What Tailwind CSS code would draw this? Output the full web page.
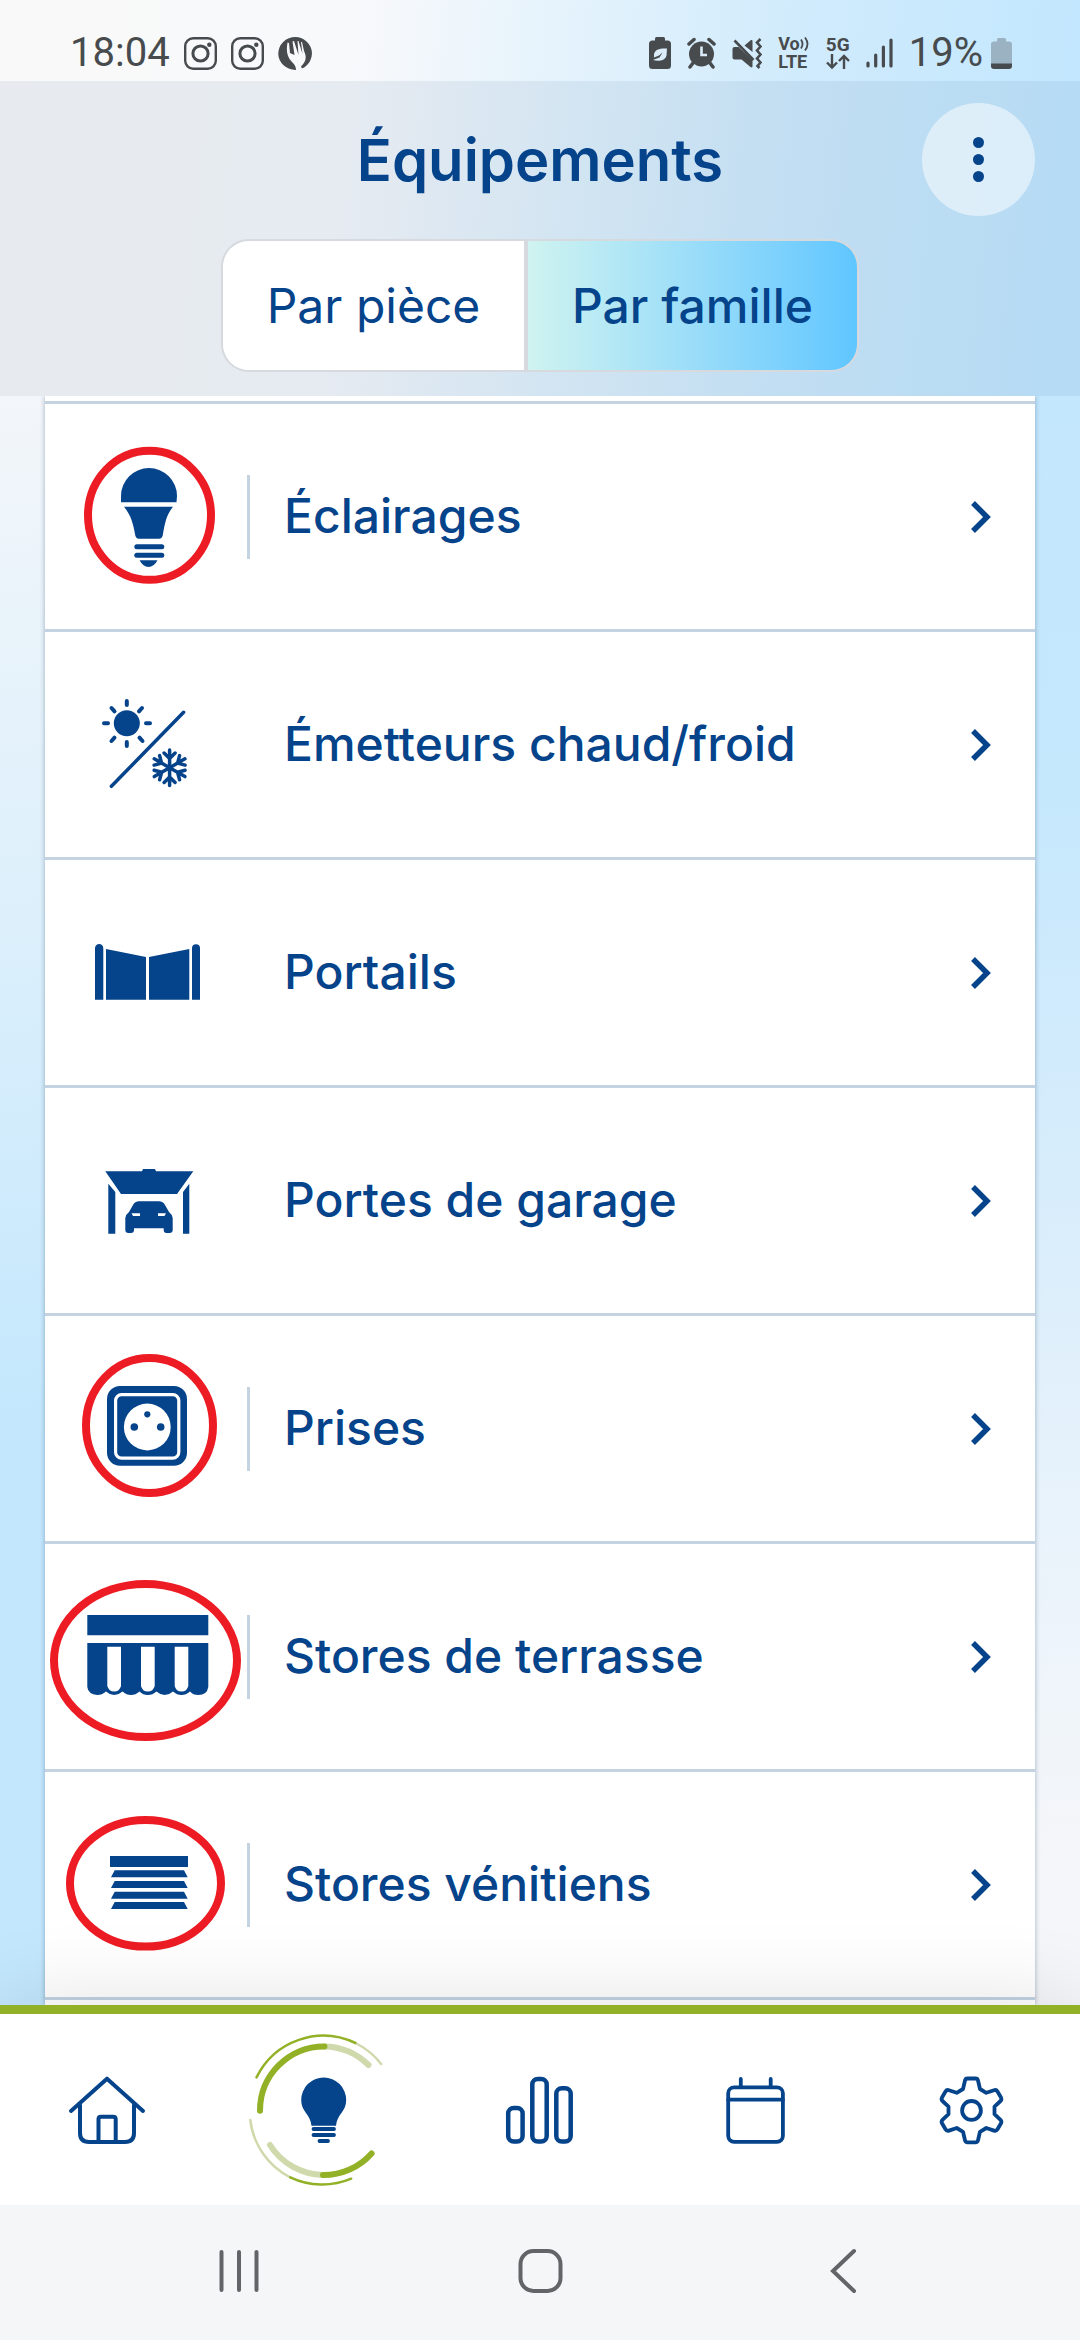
<!DOCTYPE html>
<html lang="fr">
<head>
<meta charset="utf-8">
<meta name="viewport" content="width=device-width, initial-scale=1">
<title>Équipements</title>
<script src="https://cdn.jsdelivr.net/npm/@tailwindcss/browser@4"></script>
</head>
<body class="flex min-h-screen flex-col bg-white font-['Inter',sans-serif] text-[#05438b]">

<!-- Shared glyphs -->
<svg class="hidden" aria-hidden="true">
  <symbol id="chevron" viewBox="0 0 24 36"><path d="M6 4l14 14L6 32" fill="none" stroke="currentColor" stroke-width="5.500"/></symbol>
  <symbol id="insta" viewBox="0 0 33 33"><g fill="none" stroke="currentColor"><rect x="1.200" y="1.200" width="30.600" height="30.600" rx="8" stroke-width="2.400"/><circle cx="16.500" cy="16.500" r="7.600" stroke-width="3"/></g><circle cx="25.300" cy="7.700" r="2.200" fill="currentColor"/></symbol>
</svg>

<!-- Status bar and header share one gradient -->
<div class="relative z-10 bg-[linear-gradient(96deg,#f9f9f9_0%,#f8f9fb_32%,#e3f2fc_52%,#d0ebfc_72%,#c3e7fe_96%)]">
  <div class="flex h-[81px] items-center justify-between pl-[70px] pr-[68px] pt-[25px] text-[#474b4e]">
    <div class="flex items-center gap-[14px] font-['Roboto',sans-serif] text-[40px] leading-[40px]">
      <span>18:04</span>
      <svg class="size-[33px]"><use href="#insta"/></svg>
      <svg class="size-[33px]"><use href="#insta"/></svg>
      <svg class="h-[33px] w-[35px]" viewBox="0 0 35 33">
        <path fill="currentColor" d="M17.500 0A17 16.500 0 0 1 24 31.500L23 29.500C28 25 29 20 26 14L24 5L23 5L24.500 17L20.500 4L19.500 4L20.500 18L16 4L14.500 4.500L16.500 18L12 16L11 6L9.500 5.500C8 14 9 20 14 25C17 28 18 30 18 33A17.500 16.500 0 0 1 17.500 0Z"/>
      </svg>
    </div>
    <div class="flex items-center gap-4 font-['Roboto',sans-serif]">
      <svg class="h-8 w-[22px]" viewBox="0 0 22 32"><path fill="currentColor" d="M6 1.500Q6 0 7.500 0H14.500Q16 0 16 1.500V3.500H18.500Q22 3.500 22 7V28.500Q22 32 18.500 32H3.500Q0 32 0 28.500V7Q0 3.500 3.500 3.500H6Z"/><path fill="#dcedf9" d="M18 11.500C12 11 5.500 12 5 17.500V20.500L10 18.500L13.500 15.500L10.500 20.500L4 23C8 24.500 16 24.500 17.500 18.500Z"/></svg>
      <svg class="h-8 w-[29px]" viewBox="0 0 29 32"><circle cx="14.500" cy="17" r="12.500" fill="currentColor"/><path d="M2 7l5-4.500M27 7l-5-4.500M6 26l-3 4M23 26l3 4" stroke="currentColor" stroke-width="3.500" stroke-linecap="round"/><path d="M14.500 9.500V18H20" fill="none" stroke="#dcedf9" stroke-width="2.600"/></svg>
      <svg class="h-8 w-[30px]" viewBox="0 0 29 32"><path fill="currentColor" d="M0 12Q0 10 2 10H6L20 23V29.500Q19.500 31 18 30L9 22.500H2Q0 22.500 0 20.500ZM12 8.500L18.500 3Q20 2.500 20 4V15Z"/><path d="M2 3.500L21 23" stroke="currentColor" stroke-width="2.600"/><path d="M28 2l-3.500 3.500 3.500 4-3.500 4 3.500 4-3.500 4 3.500 4-3 3.500 2 2" fill="none" stroke="currentColor" stroke-width="2.600"/></svg>
      <div class="flex flex-col text-[18px] font-bold leading-[18px]">
        <span class="flex items-center">Vo<svg class="h-[14px] w-[10px]" viewBox="0 0 10 14"><path d="M1 2.500q3 4.500 0 9M5 .5q5 6.500 0 13" fill="none" stroke="currentColor" stroke-width="1.800"/></svg></span>
        <span>LTE</span>
      </div>
      <div class="flex flex-col items-center text-[19px] font-bold leading-[18px]">
        <span>5G</span>
        <svg class="h-4 w-6" viewBox="0 0 24 16"><path d="M6 0V13.500M1 8.500l5 5 5-5M18 15V2M13 7l5-5 5 5" fill="none" stroke="currentColor" stroke-width="2.400"/></svg>
      </div>
      <svg class="h-[30px] w-[27px]" viewBox="0 0 27 30"><path d="M2 25v3M9.700 17v11M17.400 9v19M25 2v26" stroke="currentColor" stroke-width="3.200" stroke-linecap="round"/></svg>
      <div class="flex items-center gap-2">
        <span class="text-[40px] leading-[40px]">19%</span>
        <svg class="h-[31px] w-[21px]" viewBox="0 0 21 31"><path fill="#9ab2c1" d="M6 1.500Q6 0 7.500 0H13.500Q15 0 15 1.500V3.500H18Q21 3.500 21 6.500V26H0V6.500Q0 3.500 3 3.500H6Z"/><path fill="currentColor" d="M0 25.500H21V28Q21 31 18 31H3Q0 31 0 28Z"/></svg>
      </div>
    </div>
  </div>

  <header class="flex flex-col items-center gap-[23px] bg-[#33618f]/9 pb-6 pt-[22px]">
    <div class="grid w-full grid-cols-[113px_1fr_113px] items-center px-[45px]">
      <h1 class="col-start-2 text-center text-[58px] font-semibold leading-[64px]">Équipements</h1>
      <button type="button" aria-label="Plus d'options" class="flex size-[113px] flex-col items-center justify-center gap-[6px] rounded-full bg-white/50">
        <span class="size-[11px] rounded-full bg-[#05438b]"></span>
        <span class="size-[11px] rounded-full bg-[#05438b]"></span>
        <span class="size-[11px] rounded-full bg-[#05438b]"></span>
      </button>
    </div>
    <div class="grid h-[133px] w-[638px] max-w-full grid-cols-[305px_1fr] overflow-hidden rounded-[28px] border-2 border-[#d6d9dd] text-[48px]">
      <button type="button" class="border-r-4 border-[#d6d9dd] bg-white">Par pièce</button>
      <button type="button" aria-pressed="true" class="bg-linear-to-r from-[#cff3f0] to-[#5fc6ff] font-medium">Par famille</button>
    </div>
  </header>
</div>

<main class="flex flex-1 flex-col bg-[linear-gradient(to_bottom,#f3f6fa_0%,#def0fb_30%,#c3e7fd_65%,#c3e7fd_100%)]">
  <div class="flex flex-1 flex-col bg-[linear-gradient(to_bottom,#c3e7fd_0%,#c6e8fd_25%,#dceefb_55%,#e9f3fb_70%,#f5f6f9_92%)] bg-[length:50%_100%] bg-right bg-no-repeat px-[45px]">
    <ul class="flex-1 bg-white pt-[5px] text-[48px] font-medium leading-[56px] shadow-[0_0_5px_rgba(60,90,120,0.45)]">
      <li class="border-y-3 border-[#c3d3e2]">
        <a href="#eclairages" class="flex items-center pr-[44px]">
          <svg class="h-[225px] w-[202px] shrink-0" viewBox="0 0 202 225" fill="currentColor">
            <path d="M76 98.300V92A28 28 0 0 1 132 92L131.500 98.300ZM79 102.700H128C122 110 120 118 118 130Q117.500 134.700 114 134.700H94Q90.500 134.700 90 130C88 118 85 110 79 102.700Z"/>
            <rect x="89.300" y="140.300" width="30" height="5" rx="2.500"/><rect x="89.300" y="148.700" width="30" height="5" rx="2.500"/><path d="M94.600 156.300H112.500Q109 163 103.500 163T94.600 156.300Z"/>
            <ellipse cx="104.500" cy="111.300" rx="61.500" ry="64.500" fill="none" stroke="#ed1c24" stroke-width="8"/>
          </svg>
          <span class="h-[84px] w-[3px] bg-[#c3d3e2]"></span>
          <span class="flex-1 pb-[2px] pl-[34px]">Éclairages</span>
          <svg class="h-9 w-6"><use href="#chevron"/></svg>
        </a>
      </li>
      <li class="border-b-3 border-[#c3d3e2]">
        <a href="#emetteurs" class="flex items-center pr-[44px]">
          <svg class="h-[225px] w-[202px] shrink-0" viewBox="0 0 202 225" fill="none" stroke="currentColor" stroke-linecap="round" stroke-width="4">
            <circle cx="81.800" cy="91.300" r="13" fill="currentColor" stroke="none"/>
            <path d="M81.800 69v4M81.800 110v4M59 91.300h4M101 91.300h4M66.500 76l3 3.300M97 76l-3 3.300M66.500 109l3-3.300M97.500 109l-3-3.300"/>
            <path d="M66.400 154.300L138.600 80.300" stroke-width="3.500"/>
            <g stroke-width="3.500">
              <path id="arm" d="M124.600 135.700V118M124.600 126.500l-5.500-5.500M124.600 126.500l5.500-5.500"/>
              <use href="#arm" transform="rotate(60 124.600 135.700)"/><use href="#arm" transform="rotate(120 124.600 135.700)"/><use href="#arm" transform="rotate(180 124.600 135.700)"/><use href="#arm" transform="rotate(240 124.600 135.700)"/><use href="#arm" transform="rotate(300 124.600 135.700)"/>
            </g>
          </svg>
          <span class="flex-1 pb-[2px] pl-[37px]">Émetteurs chaud/froid</span>
          <svg class="h-9 w-6"><use href="#chevron"/></svg>
        </a>
      </li>
      <li class="border-b-3 border-[#c3d3e2]">
        <a href="#portails" class="flex items-center pr-[44px]">
          <svg class="h-[225px] w-[202px] shrink-0" viewBox="0 0 202 225" fill="currentColor">
            <path d="M50 139.700V88.200a4.100 4.100 0 0 1 8.300 0V139.700ZM147 139.700V88.200a4 4 0 0 1 8 0V139.700ZM61 89L101 97V139.700H61ZM104 97L144.300 89V139.700H104Z"/>
          </svg>
          <span class="flex-1 pb-[2px] pl-[37px]">Portails</span>
          <svg class="h-9 w-6"><use href="#chevron"/></svg>
        </a>
      </li>
      <li class="border-b-3 border-[#c3d3e2]">
        <a href="#garage" class="flex items-center pr-[44px]">
          <svg class="h-[225px] w-[202px] shrink-0" viewBox="0 0 202 225" fill="currentColor">
            <path d="M60.300 83.300H97L98 81H110L111 83.300H148.300L132 106H76ZM63.300 95.700L70.300 104V145.700H63.300ZM144.300 95.700L138 104V145.700H144.300Z"/>
            <path fill-rule="evenodd" d="M94 113.300H114Q118 113.300 120 117L124 124Q127.700 127 127.700 130V142Q127.700 145 124.500 145H121.500Q118.700 145 118.700 142V140.300H89V142Q89 145 86 145H83.500Q80.300 145 80.300 142V130Q80.300 127 84 124L88 117Q90 113.300 94 113.300ZM86.500 125.300L88 128H95V125.300ZM121 125.300L119.500 128H113V125.300Z"/>
          </svg>
          <span class="flex-1 pb-[2px] pl-[37px]">Portes de garage</span>
          <svg class="h-9 w-6"><use href="#chevron"/></svg>
        </a>
      </li>
      <li class="border-b-3 border-[#c3d3e2]">
        <a href="#prises" class="flex items-center pr-[44px]">
          <svg class="h-[225px] w-[202px] shrink-0" viewBox="0 0 202 225" fill="currentColor">
            <rect x="62" y="70" width="80" height="79.700" rx="13"/>
            <rect x="70.600" y="78.600" width="63.200" height="63.600" rx="6" fill="none" stroke="#fff" stroke-width="3.200"/>
            <circle cx="102.300" cy="111" r="23.400" fill="#fff"/>
            <circle cx="89.300" cy="111" r="3.800"/><circle cx="115.700" cy="111" r="3.800"/><circle cx="102.300" cy="98.300" r="3.100"/>
            <ellipse cx="104.500" cy="109.500" rx="63.500" ry="67.500" fill="none" stroke="#ed1c24" stroke-width="8"/>
          </svg>
          <span class="h-[84px] w-[3px] bg-[#c3d3e2]"></span>
          <span class="flex-1 pb-[2px] pl-[34px]">Prises</span>
          <svg class="h-9 w-6"><use href="#chevron"/></svg>
        </a>
      </li>
      <li class="border-b-3 border-[#c3d3e2]">
        <a href="#terrasse" class="flex items-center pr-[44px]">
          <svg class="h-[225px] w-[202px] shrink-0" viewBox="0 0 202 225" fill="currentColor">
            <path d="M42.300 71H163.300V91.300H42.300Z"/>
            <path d="M42.300 99H163.300V143Q162 151 153.300 151Q148 151 145 147.500Q141 151 136.500 151T128 147.500Q124 151 119.700 151T111.500 147.500Q107.500 151 102.800 151T94.500 147.500Q90.500 151 86 151T77.500 147.500Q73.500 151 69.200 151T61 147.500Q57 151 52.300 151Q43 150 42.300 143Z"/>
            <path fill="#fff" d="M62.300 102.700H76V142Q74.500 147.500 69.200 147.500T62.300 142ZM96 102.700H109.700V142Q108.200 147.500 102.800 147.500T96 142ZM129.700 102.700H143.300V142Q142 147.500 136.500 147.500T129.700 142Z"/>
            <ellipse cx="100.500" cy="116.500" rx="91.500" ry="76.500" fill="none" stroke="#ed1c24" stroke-width="8"/>
          </svg>
          <span class="h-[84px] w-[3px] bg-[#c3d3e2]"></span>
          <span class="flex-1 pb-[2px] pl-[34px]">Stores de terrasse</span>
          <svg class="h-9 w-6"><use href="#chevron"/></svg>
        </a>
      </li>
      <li class="border-b-3 border-[#c3d3e2]">
        <a href="#venitiens" class="flex items-center pr-[44px]">
          <svg class="h-[225px] w-[202px] shrink-0" viewBox="0 0 202 225" fill="currentColor">
            <path d="M65 84H143V95H65ZM69.700 98.300H139L142.700 105.300H66ZM69.700 109H139L142.700 116H66ZM69.700 119.700H139L142.700 126.700H66ZM69.700 130H139L142.700 137H66Z"/>
            <ellipse cx="100.500" cy="111.300" rx="75.500" ry="63.300" fill="none" stroke="#ed1c24" stroke-width="8"/>
          </svg>
          <span class="h-[84px] w-[3px] bg-[#c3d3e2]"></span>
          <span class="flex-1 pb-[2px] pl-[34px]">Stores vénitiens</span>
          <svg class="h-9 w-6"><use href="#chevron"/></svg>
        </a>
      </li>
    </ul>
  </div>
</main>

<nav class="relative flex h-[200px] items-center border-t-9 border-[#93b127] bg-white shadow-[0_0_90px_rgba(0,0,0,0.12)]" aria-label="Navigation principale">
  <a href="#accueil" aria-label="Accueil" class="flex flex-1 justify-center">
    <svg class="h-40 w-[150px]" viewBox="0 0 150 160" fill="none" stroke="currentColor" stroke-width="4" stroke-linecap="round" stroke-linejoin="round"><path d="M38 81L74 48.700L110 81M47 75V103Q47 112 56 112H92Q101 112 101 103V75M65.500 112V89Q65.500 86.700 68 86.700H80Q82.700 86.700 82.700 89V112"/></svg>
  </a>
  <a href="#equipements" aria-label="Équipements" aria-current="page" class="flex flex-1 justify-center">
    <svg class="h-40 w-[150px]" viewBox="0 0 150 160" fill="none" stroke-linecap="round">
      <g stroke="#cfd9ab"><path stroke-width="6" d="M75 16.400A64.300 64.300 0 0 1 119.500 35M21 115A64.300 64.300 0 0 0 74 145"/><path stroke-width="2.500" d="M106.400 13A74.300 74.300 0 0 1 132.200 34M1.300 90A74.300 74.300 0 0 0 41.300 147.400"/></g>
      <g stroke="#93b127"><path stroke-width="6" d="M11 80.700A64.300 64.300 0 0 1 75.400 16.400M74 145A64.300 64.300 0 0 0 122.600 123.400"/><path stroke-width="2.500" d="M7.500 47.400A74.300 74.300 0 0 1 106.400 13M41.300 147.400A74.300 74.300 0 0 0 102.200 148.700"/></g>
      <path fill="currentColor" d="M74.700 47.500A22.500 22.500 0 0 1 97.200 70C97.200 82 88 84 87 95.700H62.500C61.500 84 52.200 82 52.200 70A22.500 22.500 0 0 1 74.700 47.500Z"/>
      <path stroke="currentColor" stroke-width="3.800" d="M64.500 99H85M64.500 105H85M70.500 111H79"/>
    </svg>
  </a>
  <a href="#consommation" aria-label="Consommation" class="flex flex-1 justify-center">
    <svg class="h-40 w-[150px]" viewBox="0 0 150 160" fill="none" stroke="currentColor" stroke-width="4.500"><rect x="43.200" y="78" width="14.400" height="33.500" rx="5.500"/><rect x="67.300" y="49" width="14.400" height="62.500" rx="5.500"/><rect x="91.300" y="58.300" width="14.400" height="53.200" rx="5.500"/></svg>
  </a>
  <a href="#programmation" aria-label="Programmation" class="flex flex-1 justify-center">
    <svg class="h-40 w-[150px]" viewBox="0 0 150 160" fill="none" stroke="currentColor" stroke-width="3.800" stroke-linecap="round"><rect x="47.200" y="57.300" width="54.700" height="54.500" rx="6"/><path d="M47.200 69.700H101.900M59.800 49V57M89.700 49V57"/></svg>
  </a>
  <a href="#reglages" aria-label="Réglages" class="flex flex-1 justify-center">
    <svg class="h-40 w-[150px]" viewBox="0 0 150 160" fill="none" stroke="currentColor" stroke-width="3.800" stroke-linejoin="round"><circle cx="74.500" cy="80.400" r="9.400"/><path d="M70.500 48.500H78.500Q80.500 48.500 81 50.500L83 59L89.300 62.800L97 60.200Q99.300 59.500 100.500 61.500L104 67.500Q105 69.500 103.500 71L97.500 76.600V84.200L103.500 89.800Q105 91.300 104 93.300L100.500 99.300Q99.300 101.300 97 100.600L89.300 98L83 101.800L81 110.300Q80.500 112.300 78.500 112.300H70.500Q68.500 112.300 68 110.300L66 101.800L59.700 98L52 100.600Q49.700 101.300 48.500 99.300L45 93.300Q44 91.300 45.500 89.800L51.500 84.200V76.600L45.500 71Q44 69.500 45 67.500L48.500 61.500Q49.700 59.500 52 60.200L59.700 62.800L66 59L68 50.500Q68.500 48.500 70.500 48.500Z"/></svg>
  </a>
</nav>

<footer class="relative flex h-[135px] items-center bg-[#f5f6f8] px-[88px] pb-1 text-[#636467]">
  <button type="button" aria-label="Applications récentes" class="flex flex-1 justify-center"><svg class="size-12" viewBox="0 0 48 48" fill="none" stroke="currentColor" stroke-width="4" stroke-linecap="round"><path d="M6.500 5V43M24 5V43M41.500 5V43"/></svg></button>
  <button type="button" aria-label="Écran d'accueil" class="flex flex-1 justify-center"><svg class="size-12" viewBox="0 0 48 48" fill="none" stroke="currentColor" stroke-width="4"><rect x="4.500" y="4" width="40" height="40" rx="13"/></svg></button>
  <button type="button" aria-label="Retour" class="flex flex-1 justify-center"><svg class="size-12" viewBox="0 0 48 48" fill="none" stroke="currentColor" stroke-width="4" stroke-linecap="round"><path d="M37 4L16 24L37 44"/></svg></button>
</footer>
</body>
</html>
